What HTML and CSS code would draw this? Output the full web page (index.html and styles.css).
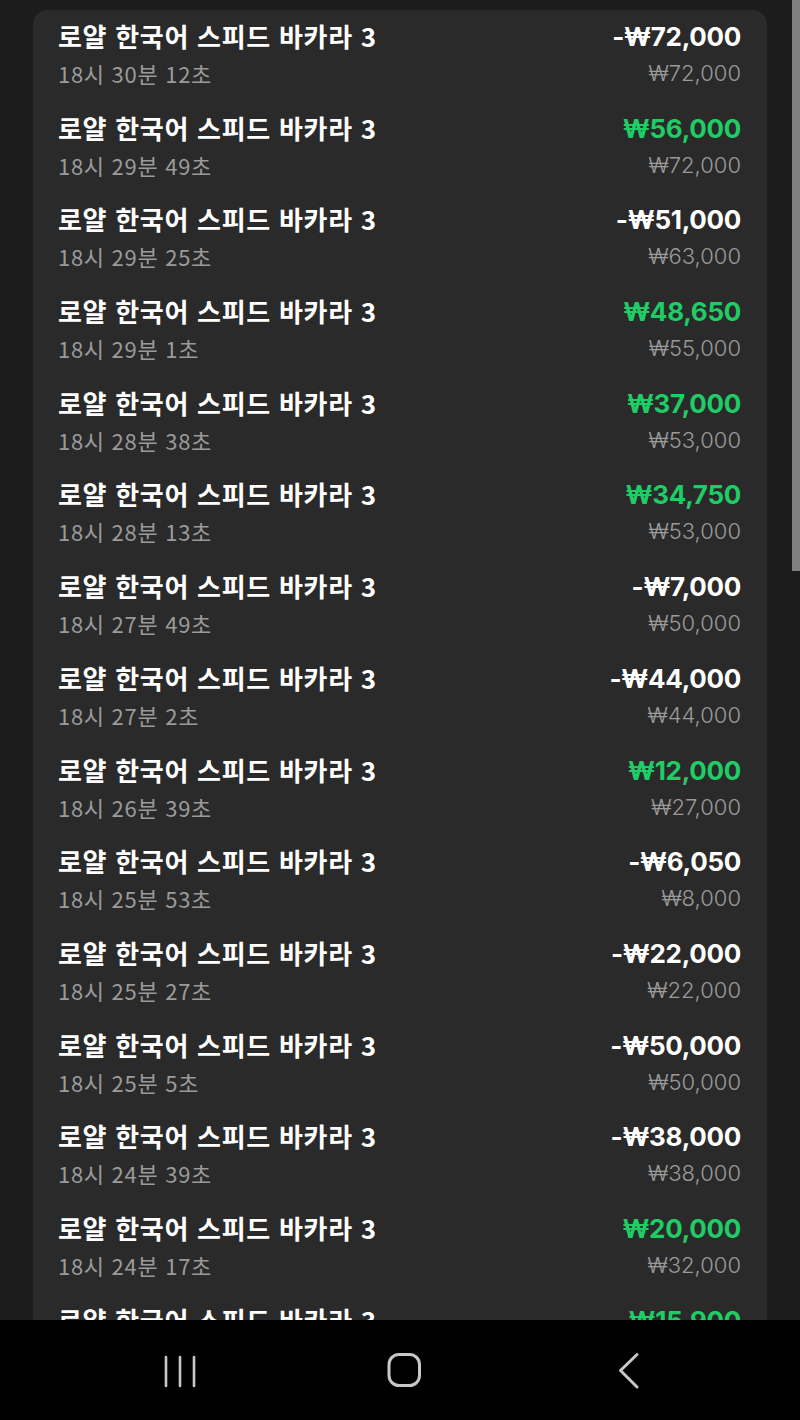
FILE: index.html
```html
<!DOCTYPE html>
<html lang="ko">
<head>
<meta charset="utf-8">
<link rel="stylesheet" href="styles.css">
</head>
<body>
<div class="page">
  <div class="card">
    <div class="row"><div class="left"><div class="title">로얄 한국어 스피드 바카라 3</div><div class="time">18시 30분 12초</div></div><div class="right"><div class="amt">-₩72,000</div><div class="bet">₩72,000</div></div></div>
    <div class="row"><div class="left"><div class="title">로얄 한국어 스피드 바카라 3</div><div class="time">18시 29분 49초</div></div><div class="right"><div class="amt win">₩56,000</div><div class="bet">₩72,000</div></div></div>
    <div class="row"><div class="left"><div class="title">로얄 한국어 스피드 바카라 3</div><div class="time">18시 29분 25초</div></div><div class="right"><div class="amt">-₩51,000</div><div class="bet">₩63,000</div></div></div>
    <div class="row"><div class="left"><div class="title">로얄 한국어 스피드 바카라 3</div><div class="time">18시 29분 1초</div></div><div class="right"><div class="amt win">₩48,650</div><div class="bet">₩55,000</div></div></div>
    <div class="row"><div class="left"><div class="title">로얄 한국어 스피드 바카라 3</div><div class="time">18시 28분 38초</div></div><div class="right"><div class="amt win">₩37,000</div><div class="bet">₩53,000</div></div></div>
    <div class="row"><div class="left"><div class="title">로얄 한국어 스피드 바카라 3</div><div class="time">18시 28분 13초</div></div><div class="right"><div class="amt win">₩34,750</div><div class="bet">₩53,000</div></div></div>
    <div class="row"><div class="left"><div class="title">로얄 한국어 스피드 바카라 3</div><div class="time">18시 27분 49초</div></div><div class="right"><div class="amt">-₩7,000</div><div class="bet">₩50,000</div></div></div>
    <div class="row"><div class="left"><div class="title">로얄 한국어 스피드 바카라 3</div><div class="time">18시 27분 2초</div></div><div class="right"><div class="amt">-₩44,000</div><div class="bet">₩44,000</div></div></div>
    <div class="row"><div class="left"><div class="title">로얄 한국어 스피드 바카라 3</div><div class="time">18시 26분 39초</div></div><div class="right"><div class="amt win">₩12,000</div><div class="bet">₩27,000</div></div></div>
    <div class="row"><div class="left"><div class="title">로얄 한국어 스피드 바카라 3</div><div class="time">18시 25분 53초</div></div><div class="right"><div class="amt">-₩6,050</div><div class="bet">₩8,000</div></div></div>
    <div class="row"><div class="left"><div class="title">로얄 한국어 스피드 바카라 3</div><div class="time">18시 25분 27초</div></div><div class="right"><div class="amt">-₩22,000</div><div class="bet">₩22,000</div></div></div>
    <div class="row"><div class="left"><div class="title">로얄 한국어 스피드 바카라 3</div><div class="time">18시 25분 5초</div></div><div class="right"><div class="amt">-₩50,000</div><div class="bet">₩50,000</div></div></div>
    <div class="row"><div class="left"><div class="title">로얄 한국어 스피드 바카라 3</div><div class="time">18시 24분 39초</div></div><div class="right"><div class="amt">-₩38,000</div><div class="bet">₩38,000</div></div></div>
    <div class="row"><div class="left"><div class="title">로얄 한국어 스피드 바카라 3</div><div class="time">18시 24분 17초</div></div><div class="right"><div class="amt win">₩20,000</div><div class="bet">₩32,000</div></div></div>
    <div class="row"><div class="left"><div class="title">로얄 한국어 스피드 바카라 3</div><div class="time">18시 23분 58초</div></div><div class="right"><div class="amt win">₩15,900</div><div class="bet">₩22,000</div></div></div>
  </div>
</div>
<div class="scrollbar"></div>
<nav class="navbar">
  <svg class="nav-icon" width="40" height="40" viewBox="0 0 40 40"><path d="M6 7v29M20 7v29M34 7v29" stroke="#c8c8c8" stroke-width="2.6" stroke-linecap="round" fill="none"/></svg>
  <svg class="nav-icon" width="40" height="40" viewBox="0 0 40 40"><rect x="5" y="4.5" width="30.5" height="31" rx="10" stroke="#c8c8c8" stroke-width="3" fill="none"/></svg>
  <svg class="nav-icon" width="40" height="40" viewBox="0 0 40 40"><path d="M29 4.5L12.5 20.5L29 37" stroke="#c8c8c8" stroke-width="3" stroke-linecap="round" stroke-linejoin="round" fill="none"/></svg>
</nav>
</body>
</html>
```
FILE: styles.css
```css
html, body {
  margin: 0;
  padding: 0;
}
body {
  background: #1c1c1c;
  width: 800px;
  height: 1420px;
  overflow: hidden;
  font-family: Inter, "Noto Sans CJK KR", sans-serif;
  position: relative;
}
.page {
  padding: 10px 33px 0 33px;
}
.card {
  background: #2a2a2a;
  border-radius: 14px;
  padding: 0 26px 0 25px;
}
.row {
  display: flex;
  justify-content: space-between;
  padding: 10px 0 13.7px 0;
}
.title {
  color: #ffffff;
  font-family: "Noto Sans CJK KR", sans-serif;
  font-weight: 700;
  font-size: 26px;
  line-height: 32px;
  letter-spacing: 0.7px;
}
.time {
  color: #9a9a9a;
  font-family: "Noto Sans CJK KR", sans-serif;
  font-weight: 400;
  font-size: 22px;
  line-height: 30px;
  margin-top: 6px;
  letter-spacing: 0.7px;
}
.right {
  text-align: right;
}
.amt {
  color: #ffffff;
  font-weight: 700;
  font-size: 26px;
  line-height: 32px;
  letter-spacing: -0.3px;
  margin-top: 1px;
}
.amt.win {
  color: #1fcc66;
}
.bet {
  color: #9a9a9a;
  font-weight: 300;
  font-size: 22px;
  line-height: 30px;
  margin-top: 5px;
}
.scrollbar {
  position: absolute;
  top: 0;
  right: 0;
  width: 8px;
  height: 571px;
  background: #808080;
}
.navbar {
  position: absolute;
  left: 0;
  bottom: 0;
  width: 800px;
  height: 100px;
  background: #000000;
  display: flex;
  align-items: center;
  gap: 184px;
  padding-left: 160px;
  box-sizing: border-box;
}
.nav-icon {
  display: block;
}
```
